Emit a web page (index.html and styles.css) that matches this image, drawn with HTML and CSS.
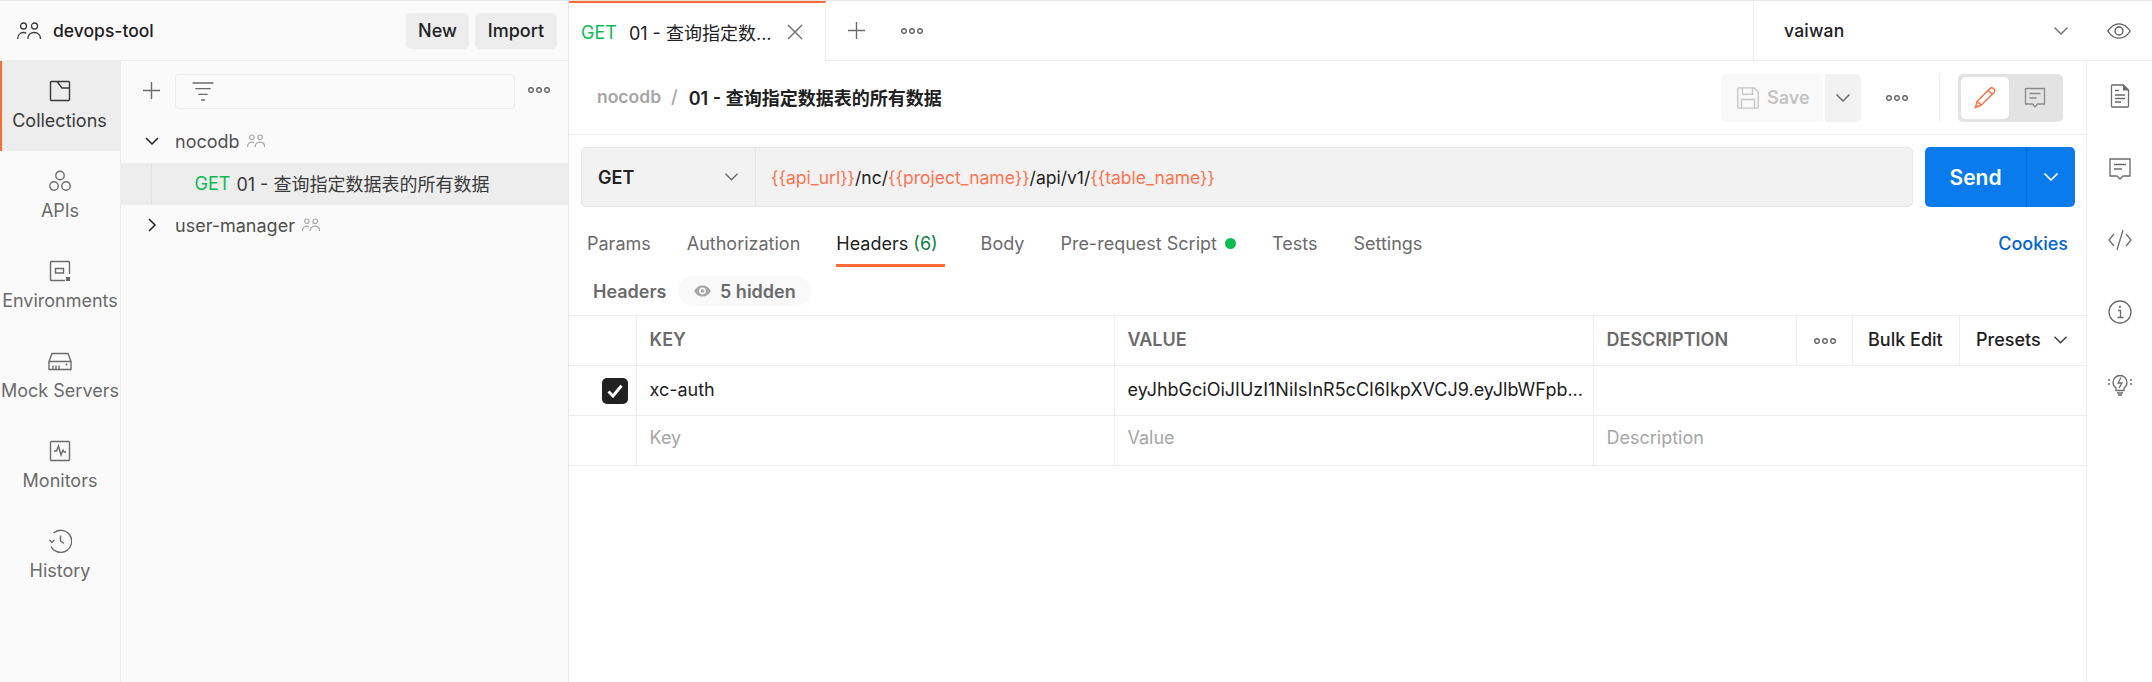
FILE: index.html
```html
<!DOCTYPE html>
<html lang="en">
<head>
<meta charset="utf-8">
<title>devops-tool</title>
<link rel="stylesheet" href="styles.css">
</head>
<body>
<div class="app">
  <aside class="side">
    <header class="workspace">
      <svg class="ws-icon" viewBox="0 0 24 18"><g fill="none" stroke="#3a3a3a" stroke-width="1.3"><circle cx="6.5" cy="4" r="3"/><circle cx="17.5" cy="4" r="3"/><path d="M.7 17c0-3.800 2.400-6.500 5.800-6.500 1 0 1.900.2 2.700.7M10.800 17c0-3.800 2.600-6.500 6.400-6.500S23.500 13.200 23.500 17"/></g></svg>
      <span class="ws-name">devops-tool</span>
      <button class="ws-btn ws-new">New</button>
      <button class="ws-btn ws-import">Import</button>
    </header>
    <div class="side-body">
      <nav class="rail">
        <a class="rail-item active">
          <svg viewBox="0 0 24 24"><path d="M3.500 2.500h17a1 1 0 0 1 1 1v17a1 1 0 0 1-1 1h-17a1 1 0 0 1-1-1v-17a1 1 0 0 1 1-1zM9 2.500l5 6.500h7.500"/></svg>
          <span>Collections</span>
        </a>
        <a class="rail-item">
          <svg viewBox="0 0 24 24"><circle cx="12" cy="6.500" r="4.200"/><circle cx="6" cy="17" r="4.200"/><circle cx="18" cy="17" r="4.200"/></svg>
          <span>APIs</span>
        </a>
        <a class="rail-item">
          <svg viewBox="0 0 24 24"><path d="M17 21.500H3.500a1 1 0 0 1-1-1v-17a1 1 0 0 1 1-1h17a1 1 0 0 1 1 1V15"/><rect x="7.500" y="9.500" width="8" height="4.500"/><rect class="solid" x="18" y="18" width="4" height="4"/></svg>
          <span>Environments</span>
        </a>
        <a class="rail-item">
          <svg viewBox="0 0 24 24"><path d="M1 12.500 4 4.500h16l3 8zM1 12.500v8h22v-8M5 20.500v-4M8 20.500v-4M11 20.500v-4"/><circle class="solid" cx="18.500" cy="15.500" r="1"/></svg>
          <span>Mock Servers</span>
        </a>
        <a class="rail-item">
          <svg viewBox="0 0 24 24"><rect x="2.500" y="2.500" width="19" height="19" rx="1"/><path d="M6 12h2.500L10.500 7l2.500 9 2-5 1.200 2H18"/></svg>
          <span>Monitors</span>
        </a>
        <a class="rail-item">
          <svg viewBox="0 0 24 24"><path d="M5.500 4A11 11 0 1 1 3 17.500M1.500 10.800l2.300 2.700 2.700-2.700M12.500 6.500V12l3.500 2.500M1.500 12.500"/></svg>
          <span>History</span>
        </a>
      </nav>
      <div class="tree">
        <div class="tree-tools">
          <svg class="tool-plus" viewBox="0 0 20 20"><path d="M10 1v18M1 10h18"/></svg>
          <div class="filter">
            <svg viewBox="0 0 22 20"><path d="M0 1h22M3 7h16M6 13h10M9 19h4"/></svg>
          </div>
          <svg class="dots" viewBox="0 0 22 6"><circle cx="3" cy="3" r="2.300"/><circle cx="11" cy="3" r="2.300"/><circle cx="19" cy="3" r="2.300"/></svg>
        </div>
        <div class="tree-row">
          <svg class="chev" viewBox="0 0 14 14"><path d="M1 4l6 6 6-6"/></svg>
          <span class="tree-name">nocodb</span>
          <svg class="team-mini" viewBox="0 0 24 18"><g><circle cx="6.500" cy="4" r="3"/><circle cx="17.500" cy="4" r="3"/><path d="M.7 17c0-3.800 2.400-6.500 5.800-6.500 1 0 1.900.2 2.700.7M10.800 17c0-3.800 2.600-6.500 6.400-6.500S23.500 13.200 23.500 17"/></g></svg>
        </div>
        <div class="tree-req">
          <span class="get">GET</span>
          <span class="req-name">01 - 查询指定数据表的所有数据</span>
        </div>
        <div class="tree-row">
          <svg class="chev" viewBox="0 0 14 14"><path d="M4 1l6 6-6 6"/></svg>
          <span class="tree-name">user-manager</span>
          <svg class="team-mini" viewBox="0 0 24 18"><g><circle cx="6.500" cy="4" r="3"/><circle cx="17.500" cy="4" r="3"/><path d="M.7 17c0-3.800 2.400-6.500 5.800-6.500 1 0 1.900.2 2.700.7M10.800 17c0-3.800 2.600-6.500 6.400-6.500S23.500 13.200 23.500 17"/></g></svg>
        </div>
      </div>
    </div>
  </aside>

  <main class="main">
    <div class="topbar">
      <div class="tab">
        <span class="get">GET</span>
        <span class="tab-name">01 - 查询指定数...</span>
        <svg class="tab-x" viewBox="0 0 16 16"><path d="M1 1l14 14M15 1 1 15"/></svg>
      </div>
      <svg class="tab-plus" viewBox="0 0 20 20"><path d="M10 1v18M1 10h18"/></svg>
      <svg class="dots tab-dots" viewBox="0 0 22 6"><circle cx="3" cy="3" r="2.300"/><circle cx="11" cy="3" r="2.300"/><circle cx="19" cy="3" r="2.300"/></svg>
      <div class="env">
        <span class="env-name">vaiwan</span>
        <svg class="env-chev" viewBox="0 0 14 8"><path d="M.5.500 7 7 13.500.500"/></svg>
      </div>
      <div class="top-eye">
        <svg viewBox="0 0 24 16"><path d="M.8 8C4 3 7.800 .8 12 .8S20 3 23.200 8C20 13 16.200 15.200 12 15.200S4 13 .8 8z"/><circle cx="12" cy="8" r="4"/></svg>
      </div>
    </div>
    <div class="workarea">
      <div class="request">
        <div class="crumbs">
          <span class="crumb-parent">nocodb</span>
          <span class="crumb-sep">/</span>
          <span class="crumb-cur">01 - 查询指定数据表的所有数据</span>
          <div class="save">
            <svg viewBox="0 0 22 22"><path d="M1.500.8h15.500l4.200 4.200v15.200a1 1 0 0 1-1 1H1.800a1 1 0 0 1-1-1V1.500a.7.700 0 0 1 .7-.7zM5.500.8v6.500h10V.8M4.500 21v-8.500h13V21"/></svg>
            <span>Save</span>
          </div>
          <div class="save-more">
            <svg viewBox="0 0 14 8"><path d="M.5.500 7 7 13.500.500"/></svg>
          </div>
          <svg class="dots crumb-dots" viewBox="0 0 22 6"><circle cx="3" cy="3" r="2.300"/><circle cx="11" cy="3" r="2.300"/><circle cx="19" cy="3" r="2.300"/></svg>
          <span class="crumb-div"></span>
          <div class="mode">
            <div class="mode-on">
              <svg viewBox="0 0 22 22"><path d="M1.500 20.500l1.500-6L15.500 2a2.500 2.500 0 0 1 4.500 3.500L7.500 18zM3 14.500l4.500 3.500M14 3.500l4.500 3.500"/></svg>
            </div>
            <div class="mode-off">
              <svg viewBox="0 0 22 22"><path d="M1.500 1.500h19v15.500h-7L11 20l-2.500-3h-7zM5.500 6.500h11M5.500 11h7"/></svg>
            </div>
          </div>
        </div>

        <div class="urlbar">
          <div class="url">
            <div class="method">
              <span>GET</span>
              <svg viewBox="0 0 14 8"><path d="M.5.500 7 7 13.500.500"/></svg>
            </div>
            <div class="url-text"><span class="var">{{api_url}}</span>/nc/<span class="var">{{project_name}}</span>/api/v1/<span class="var">{{table_name}}</span></div>
          </div>
          <div class="send">
            <span class="send-label">Send</span>
            <span class="send-more"><svg viewBox="0 0 14 8"><path d="M.5.500 7 7 13.500.500"/></svg></span>
          </div>
        </div>

        <div class="reqtabs">
          <span class="rt">Params</span>
          <span class="rt">Authorization</span>
          <span class="rt rt-headers">Headers <em>(6)</em></span>
          <span class="rt">Body</span>
          <span class="rt">Pre-request Script <i class="dot"></i></span>
          <span class="rt">Tests</span>
          <span class="rt">Settings</span>
          <span class="cookies">Cookies</span>
        </div>

        <div class="subhead">
          <span class="sub-title">Headers</span>
          <span class="pill">
            <svg viewBox="0 0 20 14"><path class="eye-out" d="M0 7c3-4.500 6-6.500 10-6.500S17 2.500 20 7c-3 4.500-6 6.500-10 6.500S3 11.500 0 7zm10 4a4 4 0 1 0 0-8 4 4 0 0 0 0 8zm0-2a2 2 0 1 0 0-4 2 2 0 0 0 0 4z"/></svg>
            <span>5 hidden</span>
          </span>
        </div>

        <div class="table">
          <div class="row row-head">
            <div class="cell"></div>
            <div class="cell th">KEY</div>
            <div class="cell th">VALUE</div>
            <div class="cell th">DESCRIPTION</div>
            <div class="cell cell-dots"><svg class="dots" viewBox="0 0 22 6"><circle cx="3" cy="3" r="2.300"/><circle cx="11" cy="3" r="2.300"/><circle cx="19" cy="3" r="2.300"/></svg></div>
            <div class="cell act">Bulk Edit</div>
            <div class="cell act act-last">Presets <svg viewBox="0 0 14 8"><path d="M.5.500 7 7 13.500.500"/></svg></div>
          </div>
          <div class="row row-data">
            <div class="cell cell-check">
              <span class="check"><svg viewBox="0 0 16 14"><path d="M1.500 7.500 6 12 14.500 1.800"/></svg></span>
            </div>
            <div class="cell td">xc-auth</div>
            <div class="cell td">eyJhbGciOiJIUzI1NiIsInR5cCI6IkpXVCJ9.eyJlbWFpb...</div>
            <div class="cell td span-4"></div>
          </div>
          <div class="row row-empty">
            <div class="cell"></div>
            <div class="cell td ph">Key</div>
            <div class="cell td ph">Value</div>
            <div class="cell td ph span-4">Description</div>
          </div>
        </div>
      </div>
      <aside class="rightbar">
        <svg viewBox="0 0 24 24"><path d="M4.500 1h11l5 5v16a1 1 0 0 1-1 1h-15a1 1 0 0 1-1-1V2a1 1 0 0 1 1-1zM7 6.500h4M7 11h10M7 14.500h10M7 18h6"/><path class="solid" d="M15 1l5.500 5.500H15z"/></svg>
        <svg viewBox="0 0 24 24"><path d="M2 3h20v17h-7l-3 3-3-3H2zM6 8.500h12M6 13h8"/></svg>
        <svg viewBox="0 0 24 24"><path d="M6 6l-5 6 5 6M18 6l5 6-5 6M15 2 9 22"/></svg>
        <svg viewBox="0 0 24 24"><circle cx="12" cy="12" r="11"/><path d="M10 10.500h2.500v7M9.500 17.500h6"/><circle class="solid" cx="12" cy="6.800" r="1.100"/></svg>
        <svg viewBox="0 0 24 24"><path d="M8 18.500v-2.500c-2-1.300-3-3.200-3-5.500a7 7 0 0 1 14 0c0 2.300-1 4.200-3 5.500v2.500zM9 21h6M10 23h4M13 5.500l-3 5.500h4l-3 5M0 8h2M0 12h2M22 8h2M22 12h2"/></svg>
      </aside>
    </div>
  </main>
</div>
</body>
</html>
```
FILE: styles.css
```css
* { box-sizing: border-box; }
html, body { margin: 0; height: 100%; }
body {
  font-family: Inter, "Noto Sans CJK SC", sans-serif;
  font-size: 18px;
  color: #212121;
  background: #fff;
  overflow: hidden;
}
svg { display: block; flex: none; }
svg path, svg rect, svg circle { vector-effect: non-scaling-stroke; }

.app { display: flex; height: 682px; border-top: 1px solid #e6e6e6; }

/* left column */
.side { width: 569px; flex: none; background: #fafafa; border-right: 1px solid #e6e6e6; display: flex; flex-direction: column; }
.workspace { height: 60px; flex: none; display: flex; align-items: center; padding-left: 17px; border-bottom: 1px solid #ededed; }
.ws-icon { width: 24px; height: 18px; margin-right: 12px; }
.ws-name { font-weight: 500; font-size: 17.5px; flex: 1; color: #212121; }
.ws-btn { height: 36px; border: 0; border-radius: 5px; background: #ededed; font: 500 18px Inter, sans-serif; color: #212121; padding: 0; }
.ws-new { width: 63px; margin-right: 6px; }
.ws-import { width: 82px; margin-right: 11px; }

.side-body { flex: 1; display: flex; min-height: 0; }
.rail { width: 121px; flex: none; border-right: 1px solid #ededed; }
.rail-item { height: 90px; display: flex; flex-direction: column; align-items: center; justify-content: flex-start; padding-top: 18px; color: #6b6b6b; }
.rail-item svg { width: 24px; height: 24px; fill: none; stroke: #6b6b6b; stroke-width: 1.4; }
.rail-item svg .solid { fill: #6b6b6b; stroke: none; }
.rail-item span { margin-top: 7px; line-height: 22px; white-space: nowrap; }
.rail-item.active { background: #ededed; border-left: 2px solid #ff6c37; color: #3a3a3a; padding-right: 3px; }
.rail-item.active svg { stroke: #3a3a3a; }

.tree { flex: 1; min-width: 0; }
.tree-tools { height: 60px; display: flex; align-items: center; padding-left: 21px; }
.tool-plus { width: 19px; height: 19px; margin-bottom: 2px; fill: none; stroke: #6b6b6b; stroke-width: 1.4; }
.filter { width: 340px; height: 35px; margin-left: 14px; border: 1px solid #ededed; border-radius: 4px; background: #fafafa; padding: 7px 0 0 16px; }
.filter svg { width: 22px; height: 19px; fill: none; stroke: #6b6b6b; stroke-width: 1.4; }
.dots { width: 22px; height: 6px; fill: none; stroke: #6b6b6b; stroke-width: 1.5; }
.tree-tools .dots { margin-left: 13px; margin-bottom: 2px; }

.tree-row { height: 42px; display: flex; align-items: center; padding: 0 0 2px 24px; }
.chev { width: 14px; height: 14px; fill: none; stroke: #212121; stroke-width: 1.5; margin-right: 16px; }
.tree-name { color: #505050; }
.team-mini { width: 18px; height: 14px; margin-left: 7px; fill: none; stroke: #a6a6a6; stroke-width: 1.2; }
.tree-req { height: 42px; display: flex; align-items: center; padding: 0 0 2px 73.5px; background: #ededed; position: relative; color: #3a3a3a; }
.tree-req::before { content: ""; position: absolute; left: 30px; top: 0; bottom: 0; width: 1px; background: #e2e2e2; }
.get { color: #0cbb52; margin-right: 6px; }

/* main */
.main { flex: 1; min-width: 0; display: flex; flex-direction: column; }
.topbar { height: 60px; flex: none; display: flex; align-items: center; border-bottom: 1px solid #ededed; }
.tab { width: 257px; height: 60px; flex: none; margin-bottom: -1px; border-top: 2px solid #ff6c37; border-right: 1px solid #ededed; display: flex; align-items: center; padding: 0 22px 0 12px; background: #fff; }
.tab .get { margin-right: 12px; }
.tab-name { white-space: nowrap; }
.tab-x { width: 16px; height: 16px; margin-left: auto; fill: none; stroke: #6b6b6b; stroke-width: 1.4; }
.tab-plus { width: 19px; height: 19px; margin-left: 21px; fill: none; stroke: #6b6b6b; stroke-width: 1.4; }
.tab-dots { margin-left: 35px; }
.env { margin-left: auto; width: 333px; height: 60px; border-left: 1px solid #ededed; display: flex; align-items: center; padding-left: 30px; }
.env-name { font-weight: 500; font-size: 17.5px; flex: 1; color: #212121; letter-spacing: .2px; }
.env-chev { width: 14px; height: 8px; margin-right: 18px; fill: none; stroke: #6b6b6b; stroke-width: 1.3; }
.top-eye { width: 66px; height: 60px; display: flex; align-items: center; justify-content: center; flex: none; }
.top-eye svg { width: 24px; height: 16px; fill: none; stroke: #5a5a5a; stroke-width: 1.3; }

.workarea { flex: 1; display: flex; min-height: 0; }
.request { width: 1518px; flex: none; border-right: 1px solid #ededed; }
.crumbs { height: 74px; display: flex; align-items: center; padding-left: 28px; border-bottom: 1px solid #ededed; }
.crumb-parent { color: #a6a6a6; font-weight: 600; font-size: 17.5px; padding-bottom: 2px; }
.crumb-sep { color: #a6a6a6; margin: 0 11px 0 10px; font-weight: 500; padding-bottom: 2px; }
.crumb-cur { color: #212121; font-weight: 600; flex: 1; padding-bottom: 2px; }
.save { width: 102px; height: 48px; background: #f9f9f9; border-radius: 5px 0 0 5px; display: flex; align-items: center; padding-left: 16px; color: #c4c4c4; font-weight: 600; gap: 8px; }
.save svg { width: 22px; height: 22px; fill: none; stroke: #c4c4c4; stroke-width: 1.3; }
.save-more { width: 36px; height: 48px; margin-left: 2px; background: #f2f2f2; border-radius: 0 5px 5px 0; display: flex; align-items: center; justify-content: center; }
.save-more svg { width: 14px; height: 8px; fill: none; stroke: #6b6b6b; stroke-width: 1.5; }
.crumb-dots { margin-left: 25px; }
.crumb-div { width: 1px; height: 48px; margin-left: 31px; background: #ededed; }
.mode { width: 105px; height: 48px; margin: 0 23px 0 18px; background: #e3e3e3; border-radius: 5px; padding: 3px; display: flex; }
.mode-on { width: 48px; height: 42px; background: #fff; border-radius: 5px; display: flex; align-items: center; justify-content: center; }
.mode-on svg { width: 22px; height: 22px; fill: none; stroke: #ff6c37; stroke-width: 1.4; }
.mode-off { flex: 1; display: flex; align-items: center; justify-content: center; }
.mode-off svg { width: 22px; height: 22px; fill: none; stroke: #8a8a8a; stroke-width: 1.3; }

.urlbar { display: flex; padding: 12px 11px 0 12px; }
.url { width: 1333px; height: 60px; background: #f2f2f2; border: 1px solid #e6e6e6; border-radius: 5px; display: flex; align-items: center; }
.method { width: 174px; height: 58px; flex: none; border-right: 1px solid #e6e6e6; display: flex; align-items: center; padding-left: 16px; font-weight: 600; color: #212121; }
.method span { flex: 1; }
.method svg { width: 13px; height: 8px; margin-right: 17px; fill: none; stroke: #6b6b6b; stroke-width: 1.4; }
.url-text { padding-left: 15px; color: #212121; white-space: nowrap; font-size: 17.5px; }
.var { color: #ff7350; }
.send { width: 150px; height: 60px; margin-left: 12px; background: #097bed; color: #fff; border-radius: 5px; display: flex; align-items: center; flex: none; }
.send-label { width: 101px; text-align: center; font-weight: 600; font-size: 21px; }
.send-more { flex: 1; height: 60px; border-left: 1px solid #0265d2; display: flex; align-items: center; justify-content: center; }
.send-more svg { width: 14px; height: 8px; fill: none; stroke: #fff; stroke-width: 1.6; }

.reqtabs { height: 60px; display: flex; align-items: center; gap: 36px; padding: 0 18px; color: #6b6b6b; }
.rt { position: relative; display: inline-flex; align-items: center; height: 60px; padding-top: 12px; white-space: pre; }
.rt-headers { color: #212121; padding-right: 7px; }
.rt-headers::after { content: ""; position: absolute; left: 0; right: 0; bottom: 0; height: 3px; background: #ff6c37; }
.rt-headers em { font-style: normal; color: #0a7f47; }
.dot { width: 11px; height: 11px; border-radius: 50%; background: #0cbb52; margin-left: 3px; }
.cookies { margin-left: auto; padding-top: 12px; color: #0265d2; font-weight: 500; }

.subhead { display: flex; align-items: center; height: 30px; margin: 9px 0 9px 24px; }
.sub-title { color: #6b6b6b; font-weight: 600; width: 85px; }
.pill { height: 30px; width: 133px; border-radius: 15px; background: #f9f9f9; display: flex; align-items: center; padding-left: 16px; gap: 9px; color: #6b6b6b; font-weight: 600; }
.pill svg { width: 17px; height: 12px; }
.eye-out { fill: #a6a6a6; fill-rule: evenodd; }

.table { border-bottom: 1px solid #ededed; }
.row { display: grid; grid-template-columns: 68px 478px 479px 203px 56px 107px 1fr; height: 50px; border-top: 1px solid #ededed; }
.cell { display: flex; align-items: center; border-right: 1px solid #ededed; padding-left: 12.5px; min-width: 0; white-space: nowrap; }
.cell:last-child { border-right: 0; }
.span-4 { grid-column: span 4; }
.th { color: #6b6b6b; font-weight: 600; padding-bottom: 2px; }
.td { color: #212121; padding-bottom: 2px; }
.ph { color: #a6a6a6; padding-bottom: 6px; }
.cell-dots { padding: 0; justify-content: center; }
.act { color: #212121; font-weight: 500; padding: 0 0 2px 15px; white-space: pre; }
.act-last { padding-left: 16px; }
.act-last svg { width: 13px; height: 8px; margin-left: 9px; fill: none; stroke: #3a3a3a; stroke-width: 1.4; }
.cell-check { padding: 0 0 0 33px; }
.check { width: 26px; height: 26px; background: #212121; border-radius: 5px; display: flex; align-items: center; justify-content: center; }
.check svg { width: 16px; height: 14px; fill: none; stroke: #fff; stroke-width: 3; }

.rightbar { flex: 1; display: flex; flex-direction: column; align-items: center; padding-top: 23px; gap: 48px; }
.rightbar svg { width: 24px; height: 24px; fill: none; stroke: #6b6b6b; stroke-width: 1.3; }
.rightbar svg .solid { fill: #6b6b6b; stroke: none; }
```
